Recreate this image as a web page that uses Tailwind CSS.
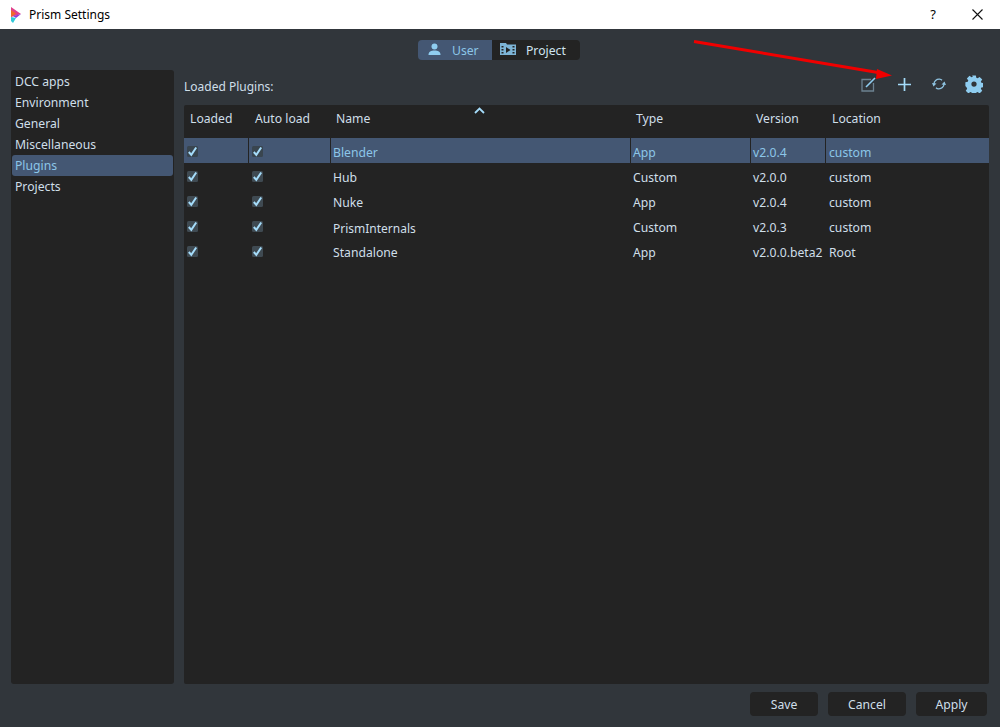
<!DOCTYPE html>
<html lang="en">
<head>
  <meta charset="UTF-8" />
  <title>Prism Settings</title>
  <script src="https://cdn.jsdelivr.net/npm/@tailwindcss/browser@4"></script>
</head>
<body class="h-screen overflow-hidden bg-[#31363b] font-['Noto_Sans',sans-serif] text-[12.2px] text-[#cfdfe9]">
  <div class="relative flex flex-col h-[727px]">
    <!-- Title bar -->
    <div class="flex items-center h-[29px] bg-white text-black text-[12px] pl-[11px]">
      <svg class="w-[10px] h-[16px] mr-2" viewBox="0 0 10 16">
        <path d="M0 0 L10 7 L0 10 Z" fill="#e0408a" />
        <path d="M0 3 L5 6.5 L0 10 Z" fill="#f06a2a" />
        <path d="M2 9 L10 7 L5 11 Z" fill="#8a3fd8" />
        <path d="M0 10 L5 11 L2 16 L0 14 Z" fill="#30c8d8" />
      </svg>
      <span>Prism Settings</span>
      <span class="ml-auto mr-[36px] text-[13px]">?</span>
      <svg class="w-[11px] h-[11px] mr-[17px]" viewBox="0 0 11 11"><path d="M0.5 0.5 L10.5 10.5 M10.5 0.5 L0.5 10.5" stroke="#111" stroke-width="1.1" /></svg>
    </div>

    <!-- User / Project switch -->
    <div class="flex justify-center pt-[11px] pr-[2px]">
      <div class="flex h-[20px] rounded-[4px] overflow-hidden">
        <div class="flex items-center w-[74px] pl-[10px] bg-[#445773] text-[#8cc6e8]">
          <svg class="w-[13px] h-[13px] mr-[11px] mb-[2px]" viewBox="0 0 13 13" fill="#8fcdf0"><circle cx="6.5" cy="3.5" r="3" /><path d="M0.5 12 C0.5 8.5 3 7.5 6.5 7.5 S12.5 8.5 12.5 12 Z" /></svg>
          <span class="pt-[2px]">User</span>
        </div>
        <div class="flex items-center w-[88px] pl-[8px] bg-[#232323] text-[#cfe3f0]">
          <svg class="w-[16px] h-[13px] mr-[10px] mb-[3px]" viewBox="0 0 16 13"><path d="M0 1 H6 L7 2.5 H16 V13 H0 Z" fill="#7db4d6" /><path d="M6 5 L10.5 8 L6 11 Z" fill="#232323" /><path d="M1.5 4 H3.5 V5.5 H1.5 Z M1.5 7 H3.5 V8.5 H1.5 Z M1.5 10 H3.5 V11.5 H1.5 Z M12.5 4 H14.5 V5.5 H12.5 Z M12.5 7 H14.5 V8.5 H12.5 Z M12.5 10 H14.5 V11.5 H12.5 Z" fill="#232323" /></svg>
          <span class="pt-[2px]">Project</span>
        </div>
      </div>
    </div>

    <div class="flex flex-1 gap-[10px] pl-[11px] pr-[11px] pt-[10px] min-h-0">
      <!-- Category list -->
      <div class="w-[163px] bg-[#232323] rounded-[3px] pt-[1px] px-[1px]">
        <div class="h-[21px] leading-[21px] pl-[3px]">DCC apps</div>
        <div class="h-[21px] leading-[21px] pl-[3px]">Environment</div>
        <div class="h-[21px] leading-[21px] pl-[3px]">General</div>
        <div class="h-[21px] leading-[21px] pl-[3px]">Miscellaneous</div>
        <div class="h-[21px] leading-[21px] pl-[3px] bg-[#445773] rounded-[3px] text-[#8cc6e8]">Plugins</div>
        <div class="h-[21px] leading-[21px] pl-[3px]">Projects</div>
      </div>

      <!-- Plugins panel -->
      <div class="flex flex-col flex-1 min-w-0">
        <div class="flex items-center h-[35px] shrink-0 pb-[5px]">
          <span class="pt-[3px] text-[12px]">Loaded Plugins:</span>
          <div class="ml-auto flex items-center pb-[2px]">
            <svg class="w-[15px] h-[15px] mr-[22px]" viewBox="0 0 15 15" fill="none"><path d="M10 2.5 H1 V14 H12.5 V6" stroke="#6c8291" stroke-width="1.3" /><path d="M5 10 L14 1" stroke="#8fcdf0" stroke-width="1.6" /></svg>
            <svg class="w-[13px] h-[13px] mr-[21px]" viewBox="0 0 13 13"><path d="M6.5 0 V13 M0 6.5 H13" stroke="#a5dcfa" stroke-width="1.7" /></svg>
            <svg class="w-[14px] h-[12px] mr-[19px]" viewBox="0 0 14 12" fill="none"><path d="M2 6 C2 3 4.5 1 7.5 1.2 C8.6 1.3 9.4 1.7 10 2.3 M12 6 C12 9 9.5 11 6.5 10.8 C5.4 10.7 4.6 10.3 4 9.7" stroke="#8fc4e2" stroke-width="1.3" /><path d="M0 5 L4.5 5.5 L1.5 8.5 Z M14 7 L9.5 6.5 L12.5 3.5 Z" fill="#8fc4e2" /></svg>
            <svg class="w-[18px] h-[18px] mr-[6px]" viewBox="0 0 24 24" fill="#8fcdf0"><path fill-rule="evenodd" d="M9.5 0.5h5l.6 3.2 1.7.7 2.7-1.9 3.5 3.5-1.9 2.7.7 1.7 3.2.6v5l-3.2.6-.7 1.7 1.9 2.7-3.5 3.5-2.7-1.9-1.7.7-.6 3.2h-5l-.6-3.2-1.7-.7-2.7 1.9-3.5-3.5 1.9-2.7-.7-1.7L.5 14.5v-5l3.2-.6.7-1.7L2.5 4.5 6 1l2.7 1.9 1.7-.7L9.5.5zM12 8.5a3.5 3.5 0 1 0 0 7 3.5 3.5 0 0 0 0-7z" /></svg>
          </div>
        </div>

        <!-- Table -->
        <div class="relative flex-1 bg-[#232323] rounded-[2px]">
          <svg class="absolute left-[290px] top-[2px] w-[11px] h-[7px]" viewBox="0 0 11 7" fill="none"><path d="M1 6 L5.5 1.5 L10 6" stroke="#a5dcfa" stroke-width="1.8" /></svg>
          <div class="grid grid-cols-[65px_82px_300px_120px_75px_1fr] h-[33px] pb-[5px] items-center">
            <div class="pl-[6px]">Loaded</div>
            <div class="pl-[6px]">Auto load</div>
            <div class="pl-[5px]">Name</div>
            <div class="pl-[5px]">Type</div>
            <div class="pl-[5px]">Version</div>
            <div class="pl-[6px]">Location</div>
          </div>

          <div class="grid grid-cols-[65px_82px_300px_120px_75px_1fr] h-[25px] items-center bg-[#445773] text-[#8cc6e8]">
            <div class="flex items-center h-full border-r border-[#232323] pl-[3px] pt-[2px]"><svg class="w-[11px] h-[11px]" viewBox="0 0 11 11"><rect width="11" height="11" rx="1.5" fill="#39454f" /><path d="M1.8 6 L4.3 8.8 L9.2 1.5" fill="none" stroke="#a5dcfa" stroke-width="2" /></svg></div>
            <div class="flex items-center h-full border-r border-[#232323] pl-[3px] pt-[2px]"><svg class="w-[11px] h-[11px]" viewBox="0 0 11 11"><rect width="11" height="11" rx="1.5" fill="#39454f" /><path d="M1.8 6 L4.3 8.8 L9.2 1.5" fill="none" stroke="#a5dcfa" stroke-width="2" /></svg></div>
            <div class="flex items-center h-full border-r border-[#232323] pl-[2px] pt-[6px]">Blender</div>
            <div class="flex items-center h-full border-r border-[#232323] pl-[2px] pt-[6px]">App</div>
            <div class="flex items-center h-full border-r border-[#232323] pl-[2px] pt-[6px]">v2.0.4</div>
            <div class="pl-[3px] pt-[6px]">custom</div>
          </div>
          <div class="grid grid-cols-[65px_82px_300px_120px_75px_1fr] h-[25px] items-center">
            <div class="pl-[3px] pt-[2px]"><svg class="w-[11px] h-[11px]" viewBox="0 0 11 11"><rect width="11" height="11" rx="1.5" fill="#3f4a52" /><path d="M1.8 6 L4.3 8.8 L9.2 1.5" fill="none" stroke="#a5dcfa" stroke-width="2" /></svg></div>
            <div class="pl-[3px] pt-[2px]"><svg class="w-[11px] h-[11px]" viewBox="0 0 11 11"><rect width="11" height="11" rx="1.5" fill="#3f4a52" /><path d="M1.8 6 L4.3 8.8 L9.2 1.5" fill="none" stroke="#a5dcfa" stroke-width="2" /></svg></div>
            <div class="pl-[2px] pt-[6px]">Hub</div>
            <div class="pl-[2px] pt-[6px]">Custom</div>
            <div class="pl-[2px] pt-[6px]">v2.0.0</div>
            <div class="pl-[3px] pt-[6px]">custom</div>
          </div>
          <div class="grid grid-cols-[65px_82px_300px_120px_75px_1fr] h-[25px] items-center">
            <div class="pl-[3px] pt-[2px]"><svg class="w-[11px] h-[11px]" viewBox="0 0 11 11"><rect width="11" height="11" rx="1.5" fill="#3f4a52" /><path d="M1.8 6 L4.3 8.8 L9.2 1.5" fill="none" stroke="#a5dcfa" stroke-width="2" /></svg></div>
            <div class="pl-[3px] pt-[2px]"><svg class="w-[11px] h-[11px]" viewBox="0 0 11 11"><rect width="11" height="11" rx="1.5" fill="#3f4a52" /><path d="M1.8 6 L4.3 8.8 L9.2 1.5" fill="none" stroke="#a5dcfa" stroke-width="2" /></svg></div>
            <div class="pl-[2px] pt-[6px]">Nuke</div>
            <div class="pl-[2px] pt-[6px]">App</div>
            <div class="pl-[2px] pt-[6px]">v2.0.4</div>
            <div class="pl-[3px] pt-[6px]">custom</div>
          </div>
          <div class="grid grid-cols-[65px_82px_300px_120px_75px_1fr] h-[25px] items-center">
            <div class="pl-[3px] pt-[2px]"><svg class="w-[11px] h-[11px]" viewBox="0 0 11 11"><rect width="11" height="11" rx="1.5" fill="#3f4a52" /><path d="M1.8 6 L4.3 8.8 L9.2 1.5" fill="none" stroke="#a5dcfa" stroke-width="2" /></svg></div>
            <div class="pl-[3px] pt-[2px]"><svg class="w-[11px] h-[11px]" viewBox="0 0 11 11"><rect width="11" height="11" rx="1.5" fill="#3f4a52" /><path d="M1.8 6 L4.3 8.8 L9.2 1.5" fill="none" stroke="#a5dcfa" stroke-width="2" /></svg></div>
            <div class="pl-[2px] pt-[6px] text-[12px]">PrismInternals</div>
            <div class="pl-[2px] pt-[6px]">Custom</div>
            <div class="pl-[2px] pt-[6px]">v2.0.3</div>
            <div class="pl-[3px] pt-[6px]">custom</div>
          </div>
          <div class="grid grid-cols-[65px_82px_300px_120px_75px_1fr] h-[25px] items-center">
            <div class="pl-[3px] pt-[2px]"><svg class="w-[11px] h-[11px]" viewBox="0 0 11 11"><rect width="11" height="11" rx="1.5" fill="#3f4a52" /><path d="M1.8 6 L4.3 8.8 L9.2 1.5" fill="none" stroke="#a5dcfa" stroke-width="2" /></svg></div>
            <div class="pl-[3px] pt-[2px]"><svg class="w-[11px] h-[11px]" viewBox="0 0 11 11"><rect width="11" height="11" rx="1.5" fill="#3f4a52" /><path d="M1.8 6 L4.3 8.8 L9.2 1.5" fill="none" stroke="#a5dcfa" stroke-width="2" /></svg></div>
            <div class="pl-[2px] pt-[6px]">Standalone</div>
            <div class="pl-[2px] pt-[6px]">App</div>
            <div class="pl-[2px] pt-[6px] whitespace-nowrap">v2.0.0.beta2</div>
            <div class="pl-[3px] pt-[6px]">Root</div>
          </div>
        </div>
      </div>
    </div>

    <!-- Dialog buttons -->
    <div class="flex justify-end gap-[10px] h-[43px] pt-[8px] pr-[13px] shrink-0">
      <button class="w-[68px] h-[24px] pt-[2px] bg-[#232323] rounded-[4px]">Save</button>
      <button class="w-[78px] h-[24px] pt-[2px] bg-[#232323] rounded-[4px]">Cancel</button>
      <button class="w-[71px] h-[24px] pt-[2px] bg-[#232323] rounded-[4px]">Apply</button>
    </div>

    <!-- Red annotation arrow -->
    <svg class="absolute left-[690px] top-[36px] w-[206px] h-[44px]" viewBox="0 0 206 44">
      <path d="M4 5.5 L188 36.5" stroke="#f00000" stroke-width="3" />
      <path d="M202 39.5 L187 33 L186 43 Z" fill="#f00000" />
    </svg>
  </div>
</body>
</html>
